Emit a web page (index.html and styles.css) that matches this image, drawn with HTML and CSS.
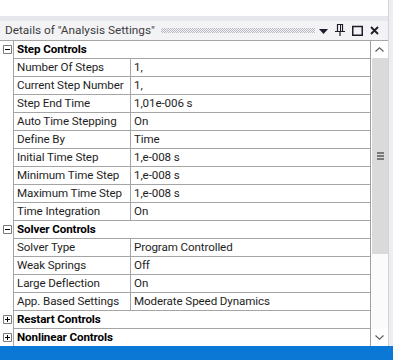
FILE: index.html
```html
<!DOCTYPE html>
<html lang="en">
<head>
<meta charset="UTF-8">
<meta name="viewport" content="width=device-width, initial-scale=1.0">
<title>Details of "Analysis Settings"</title>
<link rel="stylesheet" href="styles.css">
</head>
<body>

<div class="window">
    <div class="pane">
        <div class="top-space"></div>

        <!-- Title bar -->
        <div class="titlebar">
            <span class="title">Details of "Analysis Settings"</span>
            <span class="grip"></span>
            <span class="tb-icons">
                <svg width="9" height="5" viewBox="0 0 9 5"><path d="M0 0h9L4.5 5z" fill="#1e1e2a"/></svg>
                <svg width="10" height="12" viewBox="0 0 10 12"><path d="M2.5 0.5h5v7h-5z M0 7.5h10 M5 8v4" fill="none" stroke="#1e1e2a" stroke-width="1.2"/><path d="M5.5 1v6" stroke="#1e1e2a" stroke-width="1"/></svg>
                <svg width="11" height="11" viewBox="0 0 11 11"><path d="M0.75 1.5h9.5v8.75h-9.5z" fill="none" stroke="#1e1e2a" stroke-width="1.5"/></svg>
                <svg width="9" height="9" viewBox="0 0 9 9"><path d="M1 1l7 7M8 1L1 8" stroke="#1e1e2a" stroke-width="1.8"/></svg>
            </span>
        </div>

        <div class="details">
            <div class="grid">
                <div class="row group">
                    <div class="gutter"><svg class="box" width="9" height="9" viewBox="0 0 9 9"><path d="M0.5 0.5h8v8h-8z" fill="#fff" stroke="#7a7a7a"/><path d="M2 4.5h5" stroke="#000"/></svg></div>
                    <div class="cell head">Step Controls</div>
                </div>
                <div class="row"><div class="gutter"></div><div class="cell label">Number Of Steps</div><div class="cell value">1,</div></div>
                <div class="row"><div class="gutter"></div><div class="cell label">Current Step Number</div><div class="cell value">1,</div></div>
                <div class="row"><div class="gutter"></div><div class="cell label">Step End Time</div><div class="cell value">1,01e-006 s</div></div>
                <div class="row"><div class="gutter"></div><div class="cell label">Auto Time Stepping</div><div class="cell value">On</div></div>
                <div class="row"><div class="gutter"></div><div class="cell label">Define By</div><div class="cell value">Time</div></div>
                <div class="row"><div class="gutter"></div><div class="cell label">Initial Time Step</div><div class="cell value">1,e-008 s</div></div>
                <div class="row"><div class="gutter"></div><div class="cell label">Minimum Time Step</div><div class="cell value">1,e-008 s</div></div>
                <div class="row"><div class="gutter"></div><div class="cell label">Maximum Time Step</div><div class="cell value">1,e-008 s</div></div>
                <div class="row"><div class="gutter"></div><div class="cell label">Time Integration</div><div class="cell value">On</div></div>
                <div class="row group">
                    <div class="gutter"><svg class="box" width="9" height="9" viewBox="0 0 9 9"><path d="M0.5 0.5h8v8h-8z" fill="#fff" stroke="#7a7a7a"/><path d="M2 4.5h5" stroke="#000"/></svg></div>
                    <div class="cell head">Solver Controls</div>
                </div>
                <div class="row"><div class="gutter"></div><div class="cell label">Solver Type</div><div class="cell value">Program Controlled</div></div>
                <div class="row"><div class="gutter"></div><div class="cell label">Weak Springs</div><div class="cell value">Off</div></div>
                <div class="row"><div class="gutter"></div><div class="cell label">Large Deflection</div><div class="cell value">On</div></div>
                <div class="row"><div class="gutter"></div><div class="cell label">App. Based Settings</div><div class="cell value">Moderate Speed Dynamics</div></div>
                <div class="row group">
                    <div class="gutter"><svg class="box" width="9" height="9" viewBox="0 0 9 9"><path d="M0.5 0.5h8v8h-8z" fill="#fff" stroke="#7a7a7a"/><path d="M2 4.5h5M4.5 2v5" stroke="#000"/></svg></div>
                    <div class="cell head">Restart Controls</div>
                </div>
                <div class="row group last">
                    <div class="gutter"><svg class="box" width="9" height="9" viewBox="0 0 9 9"><path d="M0.5 0.5h8v8h-8z" fill="#fff" stroke="#7a7a7a"/><path d="M2 4.5h5M4.5 2v5" stroke="#000"/></svg></div>
                    <div class="cell head">Nonlinear Controls</div>
                </div>
            </div>

            <!-- Scrollbar -->
            <div class="scrollbar">
                <div class="sb-btn">
                    <svg width="9" height="5" viewBox="0 0 9 5"><path d="M0.5 4.5L4.5 0.8L8.5 4.5" fill="none" stroke="#606060" stroke-width="1.2"/></svg>
                </div>
                <div class="sb-thumb">
                    <span></span><span></span><span></span>
                </div>
                <div class="sb-track"></div>
                <div class="sb-btn">
                    <svg width="9" height="5" viewBox="0 0 9 5"><path d="M0.5 0.5L4.5 4.2L8.5 0.5" fill="none" stroke="#606060" stroke-width="1.2"/></svg>
                </div>
            </div>
        </div>
    </div>
    <div class="edge"></div>
</div>

<div class="statusbar"></div>

</body>
</html>
```

FILE: styles.css
```css
/* Reset */
* {
    box-sizing: border-box;
    margin: 0;
    padding: 0;
}

body {
    width: 393px;
    height: 360px;
    overflow: hidden;
    background: #ffffff;
    font-family: Roboto, 'Noto Sans', sans-serif;
    font-size: 12px;
    color: #1e1e1e;
}

.window {
    display: flex;
    height: 346px;
}

.pane {
    width: 388px;
    display: flex;
    flex-direction: column;
}

.top-space {
    height: 16px;
    background: #ffffff;
}

/* Right window edge */
.edge {
    width: 5px;
    background: #eeeef2;
    border-left: 1px solid #d4d4d8;
}

/* Title bar */
.titlebar {
    height: 25px;
    background: #f3f3f6;
    border-top: 5px solid #e6e7ec;
    display: flex;
    align-items: center;
    padding-left: 5px;
}

.title {
    color: #3c3c3c;
    font-size: 11.8px;
    white-space: nowrap;
    line-height: 19px;
}

.grip {
    flex: 1;
    height: 5px;
    margin: 1px 4px 0 6px;
    background-image: conic-gradient(#b9b9c2 25%, transparent 0 50%, #b9b9c2 0 75%, transparent 0);
    background-size: 2px 2px;
}

.tb-icons {
    display: flex;
    align-items: center;
    gap: 7px;
    padding-right: 9px;
}

.tb-icons svg:first-child {
    margin-top: 2px;
}

/* Details grid */
.details {
    flex: 1;
    display: flex;
    border-top: 1px solid #a5a5a5;
}

.grid {
    width: 371px;
    border-right: 1px solid #a0a0a0;
    background: #ffffff;
}

.row {
    display: grid;
    grid-template-columns: 14px 117px 1fr;
    height: 18px;
}

.row.last {
    height: 17px;
}

.gutter {
    border-right: 1px solid #a5a5a5;
    position: relative;
}

.box {
    position: absolute;
    left: 3px;
    top: 4px;
    display: block;
}

.cell {
    border-bottom: 1px solid #a5a5a5;
    padding-left: 3px;
    line-height: 17px;
    font-size: 11.6px;
    letter-spacing: -0.1px;
    white-space: nowrap;
    overflow: hidden;
}

.row.last .cell {
    border-bottom: 0;
}

.label {
    border-right: 1px solid #a5a5a5;
}

.head {
    grid-column: 2 / 4;
    font-weight: bold;
    color: #000;
}

/* Scrollbar */
.scrollbar {
    width: 17px;
    display: flex;
    flex-direction: column;
    background: #ffffff;
}

.sb-btn {
    height: 17px;
    display: flex;
    align-items: center;
    justify-content: center;
}

.sb-thumb {
    height: 196px;
    background: #dadada;
    display: flex;
    flex-direction: column;
    align-items: center;
    justify-content: center;
    gap: 1px;
    margin-left: 1px;
}

.sb-thumb span {
    width: 7px;
    height: 2px;
    background: #787878;
}

.sb-track {
    flex: 1;
    background: #fbfbfb;
}

.statusbar {
    height: 14px;
    background: #0a78d4;
}
```
